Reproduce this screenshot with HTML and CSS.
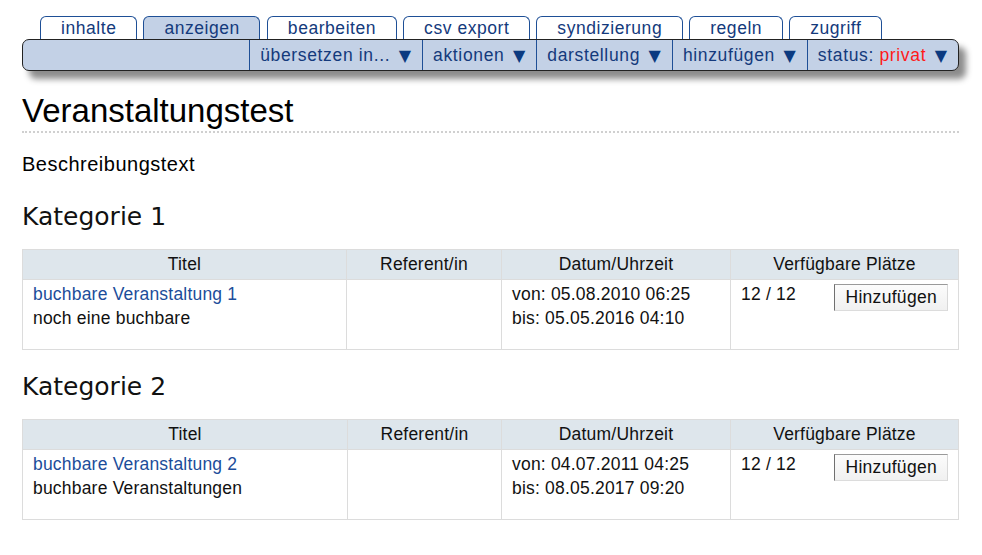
FILE: index.html
```html
<!DOCTYPE html>
<html lang="de">
<head>
<meta charset="utf-8">
<title>Veranstaltungstest</title>
<link rel="stylesheet" href="styles.css">
</head>
<body>
<div class="page">
  <ul class="tabs">
    <li class="tab">inhalte</li>
    <li class="tab active">anzeigen</li>
    <li class="tab">bearbeiten</li>
    <li class="tab">csv export</li>
    <li class="tab">syndizierung</li>
    <li class="tab">regeln</li>
    <li class="tab">zugriff</li>
  </ul>
  <div class="actionbar">
    <div class="menu">übersetzen in... <span class="arrow">▼</span></div>
    <div class="menu">aktionen <span class="arrow">▼</span></div>
    <div class="menu">darstellung <span class="arrow">▼</span></div>
    <div class="menu">hinzufügen <span class="arrow">▼</span></div>
    <div class="menu">status: <span class="state">privat</span> <span class="arrow">▼</span></div>
  </div>

  <h1 class="title">Veranstaltungstest</h1>
  <p class="desc">Beschreibungstext</p>

  <h2 class="cat">Kategorie 1</h2>
  <table class="events">
    <colgroup>
      <col class="c-title"><col class="c-ref"><col class="c-date"><col class="c-seats">
    </colgroup>
    <thead>
      <tr><th>Titel</th><th>Referent/in</th><th>Datum/Uhrzeit</th><th>Verfügbare Plätze</th></tr>
    </thead>
    <tbody>
      <tr>
        <td><a class="ev-link" href="#">buchbare Veranstaltung 1</a><div class="ev-desc">noch eine buchbare</div></td>
        <td></td>
        <td>von: 05.08.2010 06:25<br>bis: 05.05.2016 04:10</td>
        <td><button class="add">Hinzufügen</button>12 / 12</td>
      </tr>
    </tbody>
  </table>

  <h2 class="cat">Kategorie 2</h2>
  <table class="events">
    <colgroup>
      <col class="c-title2"><col class="c-ref2"><col class="c-date"><col class="c-seats">
    </colgroup>
    <thead>
      <tr><th>Titel</th><th>Referent/in</th><th>Datum/Uhrzeit</th><th>Verfügbare Plätze</th></tr>
    </thead>
    <tbody>
      <tr>
        <td><a class="ev-link" href="#">buchbare Veranstaltung 2</a><div class="ev-desc">buchbare Veranstaltungen</div></td>
        <td></td>
        <td>von: 04.07.2011 04:25<br>bis: 08.05.2017 09:20</td>
        <td><button class="add">Hinzufügen</button>12 / 12</td>
      </tr>
    </tbody>
  </table>
</div>
</body>
</html>
```

FILE: styles.css
```css
html, body {
  margin: 0;
  padding: 0;
  background: #ffffff;
}

body {
  font-family: "Liberation Sans", Arial, sans-serif;
  color: #000;
}

.page {
  padding: 16px 23px 0 22px;
}

/* Tabs */
.tabs {
  list-style: none;
  margin: 0 0 0 18px;
  padding: 0;
  display: flex;
  align-items: flex-end;
}

.tab {
  margin-right: 6.5px;
  padding: 0 19.5px 0 20px;
  height: 22px;
  line-height: 22px;
  border: 1px solid #1e4f96;
  border-bottom: none;
  border-radius: 6px 6px 0 0;
  background: #fff;
  color: #143a7c;
  font-size: 17.5px;
  letter-spacing: 0.55px;
  white-space: nowrap;
}

.tab.active {
  background: #c3d1e6;
}

/* Action bar */
.actionbar {
  display: flex;
  justify-content: flex-end;
  height: 30px;
  border: 1px solid #222;
  border-radius: 7px;
  background: #c3d1e6;
  box-shadow: 7px 8px 6px rgba(0, 0, 0, 0.45);
}

.menu {
  border-left: 1px solid #1e4f96;
  padding: 0 10px;
  line-height: 30px;
  font-size: 17.5px;
  letter-spacing: 0.65px;
  color: #143a7c;
  white-space: nowrap;
}

.arrow {
  margin-left: 3px;
  margin-right: 1px;
  color: #0b3a80;
  font-family: "DejaVu Sans", sans-serif;
  font-size: 16px;
  letter-spacing: 0;
}

.state {
  color: #ff1a1a;
}

/* Heading */
.title {
  margin: 21px 0 0;
  padding-bottom: 1px;
  font-family: "Liberation Sans", Arial, sans-serif;
  font-weight: normal;
  font-size: 33px;
  line-height: 38px;
  border-bottom: 2px dotted #d0d0d0;
}

.desc {
  margin: 19px 0 0;
  font-size: 20px;
  line-height: 24px;
  letter-spacing: 0.5px;
}

.cat {
  margin: 26px 0 17px;
  font-family: "DejaVu Sans", Verdana, sans-serif;
  font-weight: normal;
  font-size: 25px;
  line-height: 30px;
  color: #111;
}

.events + .cat {
  margin-top: 22px;
}

/* Tables */
.events {
  width: 100%;
  border-collapse: collapse;
  table-layout: fixed;
  font-size: 17.5px;
  letter-spacing: 0.2px;
}

.c-title { width: 324px; }
.c-ref { width: 155px; }
.c-title2 { width: 325px; }
.c-ref2 { width: 154px; }
.c-date { width: 229px; }
.c-seats { width: auto; }

.events th {
  height: 29px;
  padding: 0 10px;
  background: #dee6ec;
  border: 1px solid #dcdcdc;
  font-weight: normal;
  text-align: center;
  color: #111;
}

.events td {
  height: 47px;
  padding: 2px 10px 19px;
  border: 1px solid #dcdcdc;
  vertical-align: top;
  line-height: 24px;
  color: #111;
}

.ev-link {
  color: #1c4d9a;
  text-decoration: none;
}

.ev-desc {
  color: #111;
}

.add {
  float: right;
  margin-top: 2px;
  height: 27px;
  padding: 0 10px;
  font-family: "Liberation Sans", Arial, sans-serif;
  font-size: 17.5px;
  letter-spacing: 0.3px;
  color: #111;
  background: linear-gradient(#fcfcfc, #f0f0f0);
  border: 1px solid;
  border-color: #9a9a9a #d8d8d8 #dcdcdc #707070;
  border-radius: 0;
}
```
